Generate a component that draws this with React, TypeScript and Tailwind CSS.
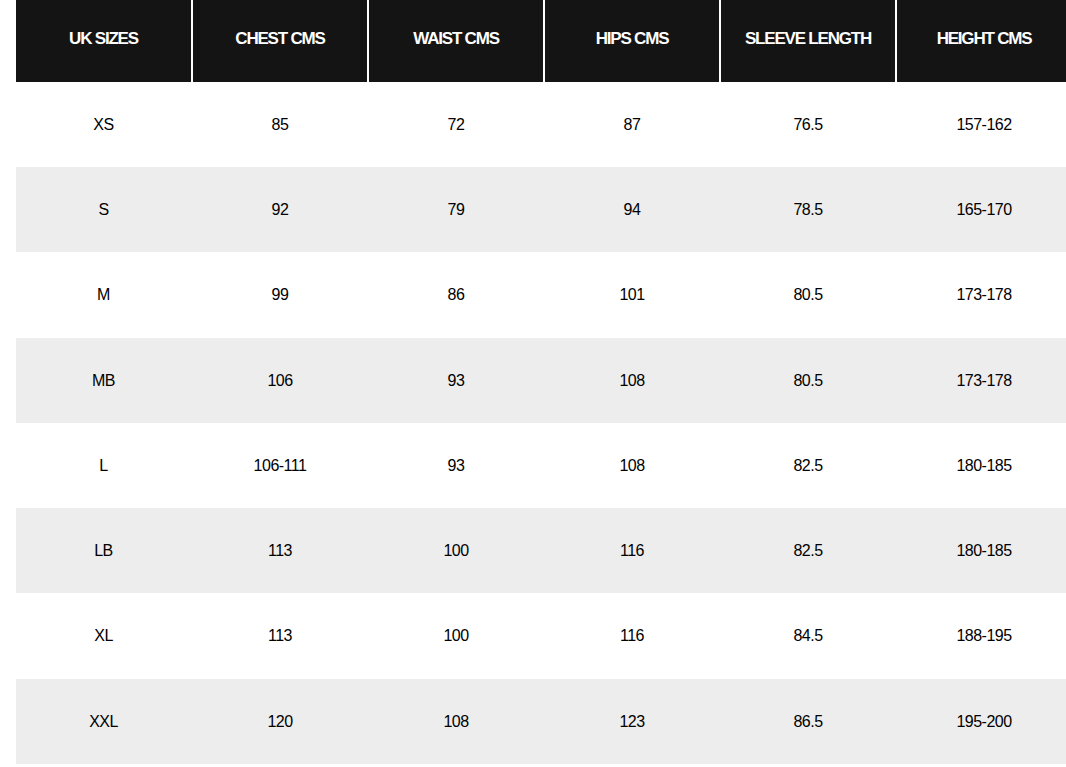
import React from "react";

const headers = ["UK SIZES", "CHEST CMS", "WAIST CMS", "HIPS CMS", "SLEEVE LENGTH", "HEIGHT CMS"];
const rows = [
  ["XS", "85", "72", "87", "76.5", "157-162"],
  ["S", "92", "79", "94", "78.5", "165-170"],
  ["M", "99", "86", "101", "80.5", "173-178"],
  ["MB", "106", "93", "108", "80.5", "173-178"],
  ["L", "106-111", "93", "108", "82.5", "180-185"],
  ["LB", "113", "100", "116", "82.5", "180-185"],
  ["XL", "113", "100", "116", "84.5", "188-195"],
  ["XXL", "120", "108", "123", "86.5", "195-200"],
];
const heights = ["h-[85px]", "h-[85px]", "h-[86px]", "h-[85px]", "h-[85px]", "h-[85px]", "h-[86px]", "h-[85px]"];

export default function App() {
  return (
    <div className="w-[1066px] h-[767px] overflow-hidden bg-white text-black" style={{ fontFamily: '"Liberation Sans", Arial, sans-serif' }}>
      <div className="pl-[16px] w-[1090px]">
        <div className="flex h-[82px]">
          {headers.map((h, i) => (
            <div
              key={h}
              className={
                i === 0
                  ? "w-[175px] shrink-0 bg-[#141414] flex items-center justify-center pb-[4px] text-white font-bold text-[17px] tracking-[-1.2px]"
                  : "w-[176px] shrink-0 bg-[#141414] border-l-2 border-white flex items-center justify-center pb-[4px] text-white font-bold text-[17px] tracking-[-1.2px]"
              }
            >
              {h}
            </div>
          ))}
        </div>
        {rows.map((r, ri) => (
          <div key={ri} className={(ri % 2 === 1 ? "bg-[#ededed] " : "bg-white ") + "flex " + heights[ri]}>
            {r.map((c, ci) => (
              <div
                key={ci}
                className={
                  ci === 0
                    ? "w-[175px] shrink-0 flex items-center justify-center text-[16px] tracking-[-0.5px]"
                    : "w-[176px] shrink-0 pl-[2px] flex items-center justify-center text-[16px] tracking-[-0.5px]"
                }
              >
                {c}
              </div>
            ))}
          </div>
        ))}
      </div>
    </div>
  );
}
